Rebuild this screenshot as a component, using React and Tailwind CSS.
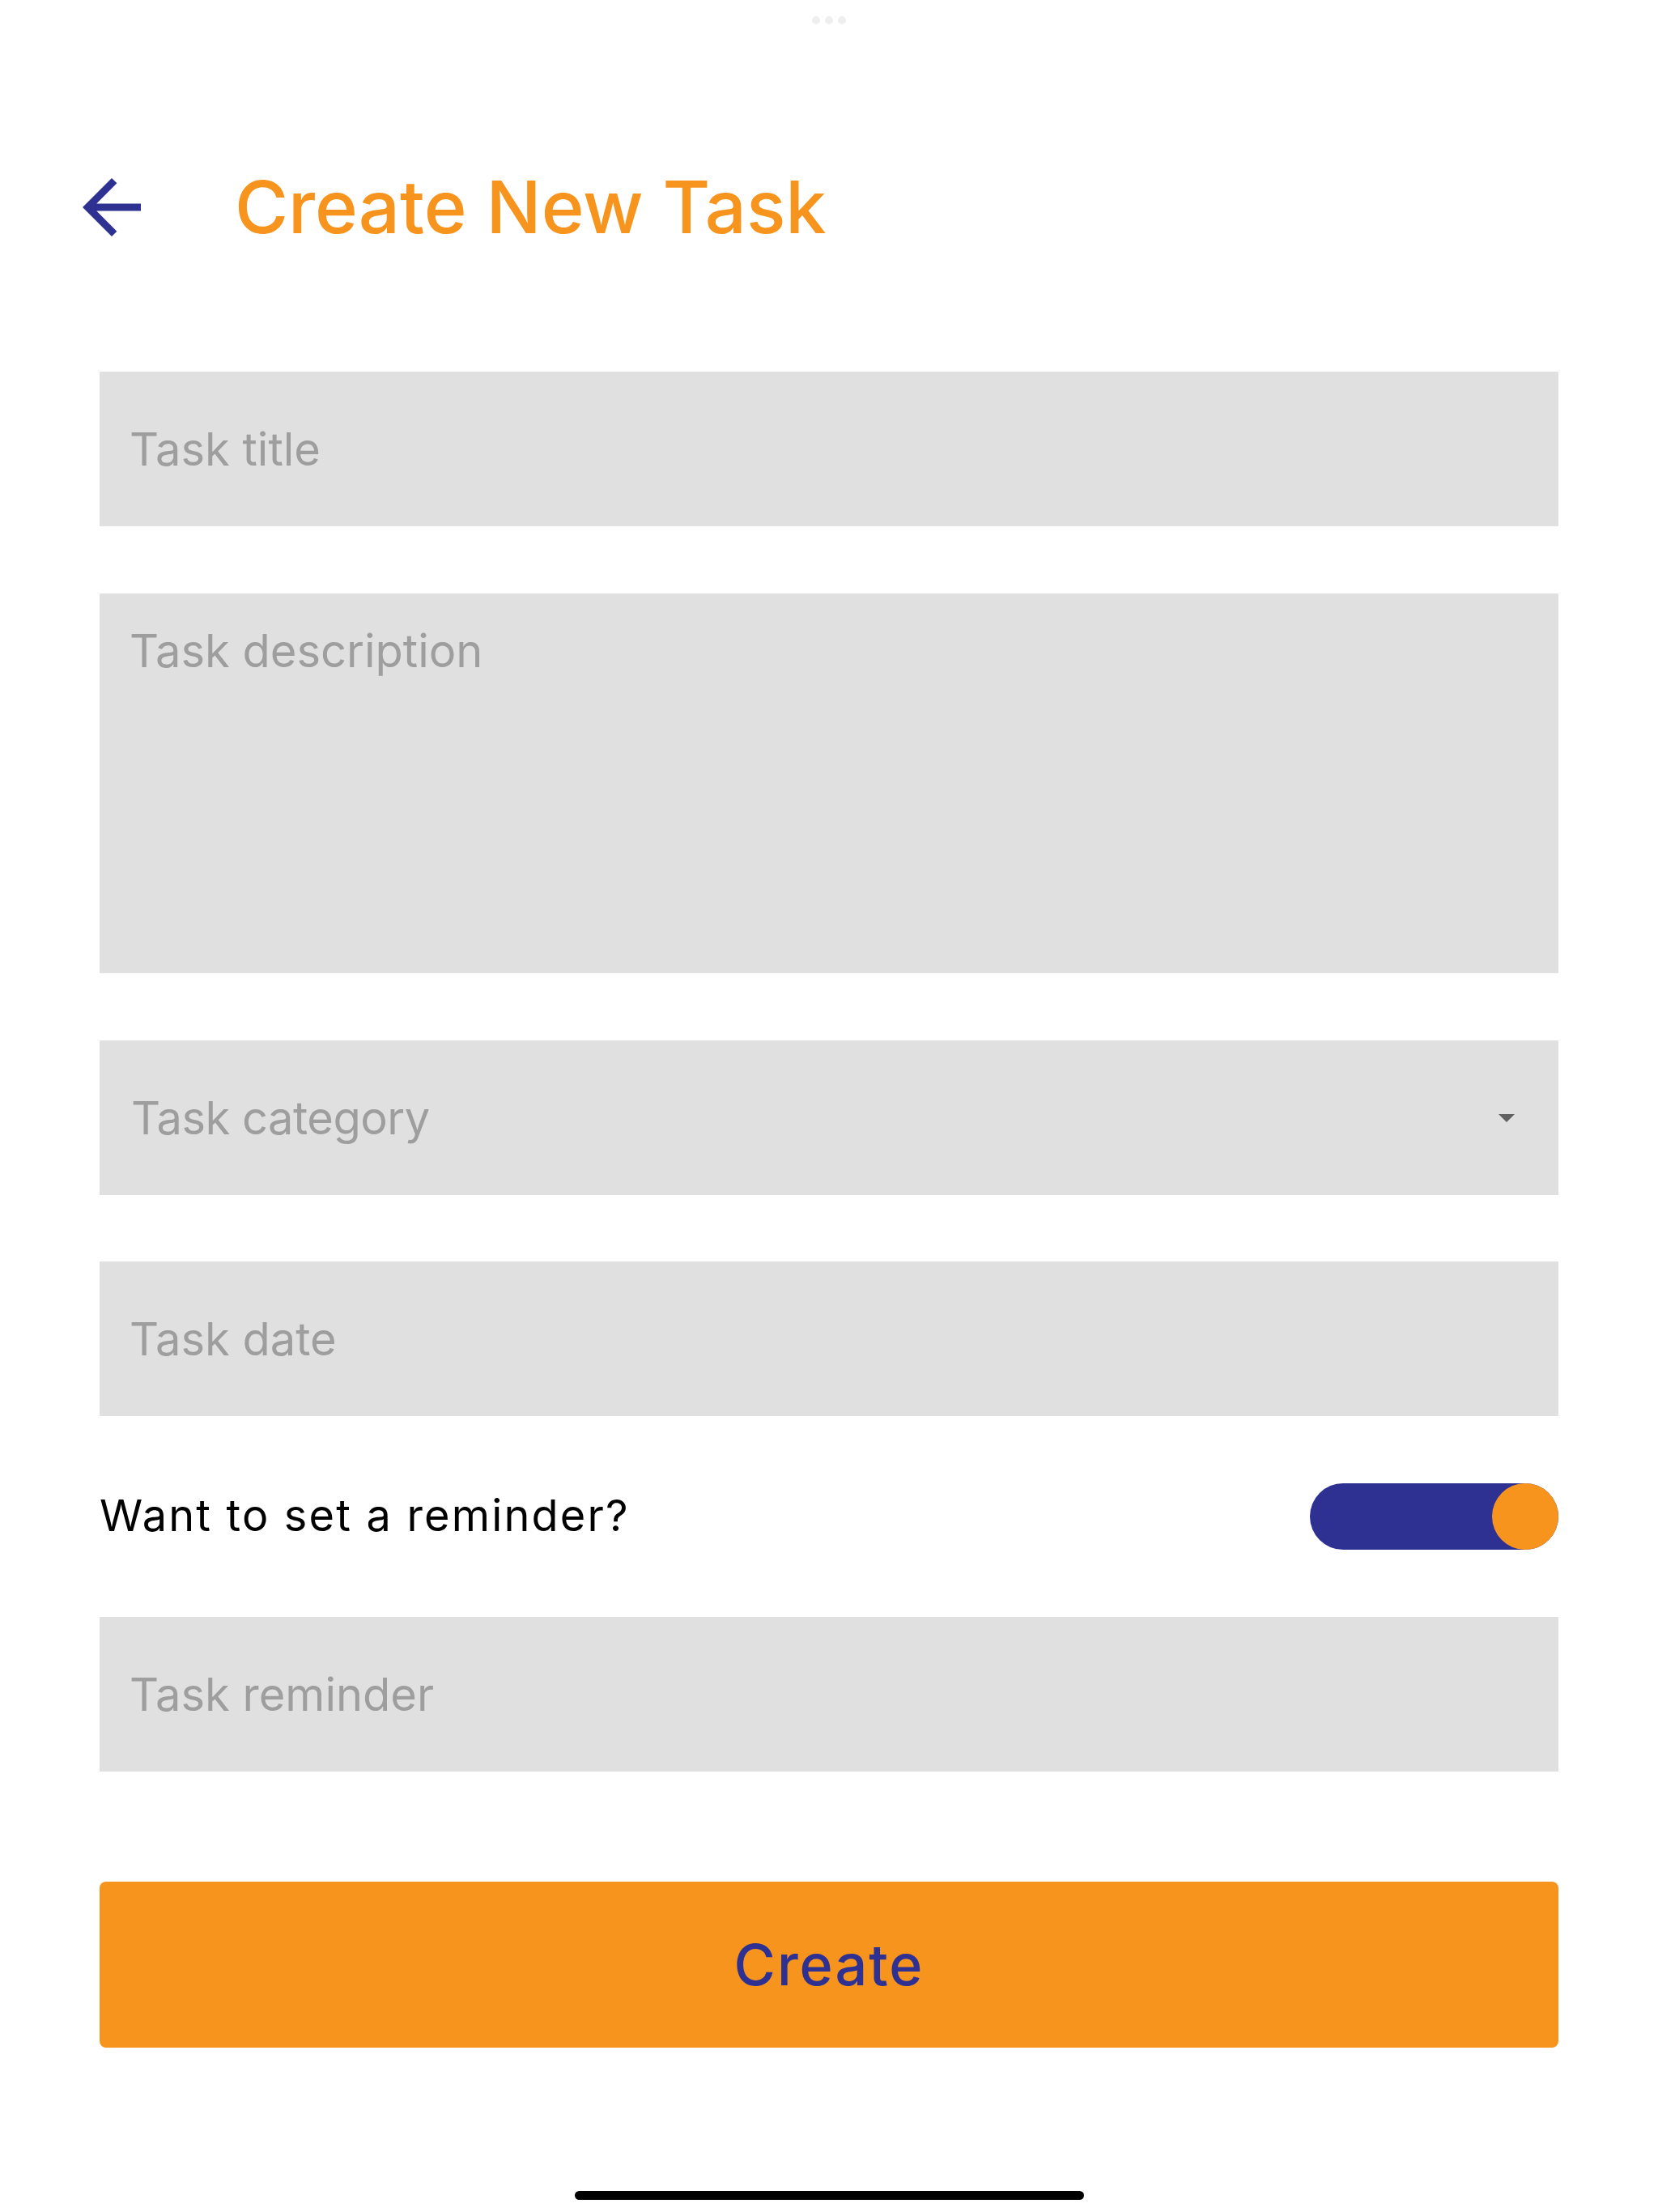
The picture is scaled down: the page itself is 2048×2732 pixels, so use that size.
import { useState } from 'react';
import { MdArrowBack } from 'react-icons/md';

const fieldClass =
  'block w-full h-[191px] bg-[#e0e0e0] px-[37px] text-[56px] text-[#424242] placeholder:text-[#9e9e9e] outline-none';

export default function App() {
  const [reminder, setReminder] = useState(true);

  return (
    <div className="h-[2732px] bg-white flex flex-col font-['Inter',sans-serif]">
      {/* top handle */}
      <div className="flex justify-center gap-[6px] pt-[20px]">
        <span className="w-[10px] h-[10px] rounded-full bg-[#efefef]" />
        <span className="w-[10px] h-[10px] rounded-full bg-[#efefef]" />
        <span className="w-[10px] h-[10px] rounded-full bg-[#efefef]" />
      </div>

      <header className="mt-[172px] flex items-center pl-[84px]">
        <button type="button" className="text-[#2e3192]">
          <MdArrowBack size={108} />
        </button>
        <h1 className="ml-[98px] text-[90px] font-medium text-[#f7941e] leading-none">
          Create New Task
        </h1>
      </header>

      <form className="mt-[149px] px-[123px] flex flex-col">
        <input type="text" placeholder="Task title" className={fieldClass} />

        <textarea
          placeholder="Task description"
          className="mt-[83px] block w-full h-[469px] resize-none bg-[#e0e0e0] px-[37px] pt-[43px] text-[56px] leading-[56px] text-[#424242] placeholder:text-[#9e9e9e] outline-none"
        />

        <button
          type="button"
          className="mt-[83px] w-full h-[191px] bg-[#e0e0e0] pl-[39px] pr-[54px] flex items-center justify-between text-[56px] tracking-[-0.5px] text-[#9e9e9e]"
        >
          <span>Task category</span>
          <svg width="20" height="10" viewBox="0 0 20 10">
            <path d="M0 0h20L10 10z" fill="#616161" />
          </svg>
        </button>

        <input type="text" placeholder="Task date" className={`mt-[82px] ${fieldClass}`} />

        <div className="mt-[83px] h-[82px] flex items-center justify-between">
          <span className="text-[54px] tracking-[2.2px] text-black -mt-[4px]">Want to set a reminder?</span>
          <button
            type="button"
            onClick={() => setReminder(!reminder)}
            className={`w-[307px] h-[82px] rounded-full bg-[#2e3192] flex ${reminder ? 'justify-end' : 'justify-start'}`}
          >
            <span className="w-[82px] h-[82px] rounded-full bg-[#f7941e]" />
          </button>
        </div>

        <input type="text" placeholder="Task reminder" className={`mt-[83px] ${fieldClass}`} />

        <button
          type="submit"
          className="mt-[136px] w-full h-[205px] rounded-[8px] bg-[#f7941e] text-[70px] tracking-[2px] font-medium text-[#2e3192]"
        >
          Create
        </button>
      </form>

      <div className="mt-auto mb-[15px] mx-auto w-[629px] h-[11px] rounded-full bg-black" />
    </div>
  );
}
